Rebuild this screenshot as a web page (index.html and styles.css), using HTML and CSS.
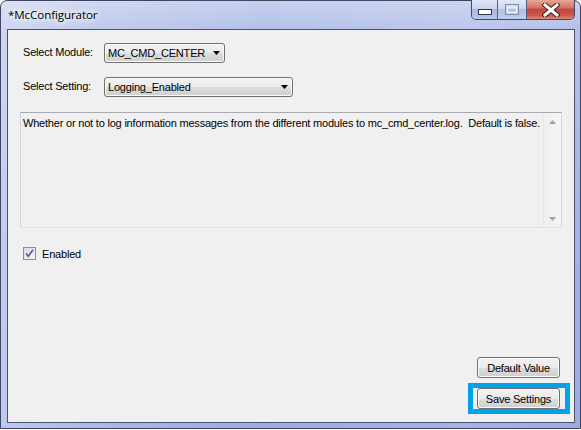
FILE: index.html
```html
<!DOCTYPE html>
<html>
<head>
<meta charset="utf-8">
<link rel="stylesheet" href="styles.css">
</head>
<body>
<div class="window">
  <div class="titlebar">
    <span class="title">*McConfigurator</span>
    <div class="caption">
      <div class="cbtn min"><svg width="14" height="6" viewBox="0 0 14 6"><rect x="0.5" y="0.5" width="13" height="5" fill="#fff" stroke="#2b3550"/></svg></div>
      <div class="cbtn max"><svg width="14" height="11" viewBox="0 0 14 11"><rect x="0.5" y="0.5" width="13" height="10" fill="none" stroke="#7d89a8"/><rect x="2.5" y="3.5" width="9" height="5" fill="none" stroke="#eef1f9" stroke-width="1.5"/></svg></div>
      <div class="cbtn close"><svg width="18" height="14" viewBox="0 0 18 14"><path d="M3 2 L15 12 M15 2 L3 12" stroke="#3a1a18" stroke-width="5" stroke-linecap="square"/><path d="M3 2 L15 12 M15 2 L3 12" stroke="#fff" stroke-width="3" stroke-linecap="square"/></svg></div>
    </div>
  </div>
  <div class="client">
    <div class="row r1">
      <span class="lbl">Select Module:</span>
      <div class="combo c1"><span class="ctext">MC_CMD_CENTER</span><svg class="arrow" width="7" height="4" viewBox="0 0 7 4"><path d="M0 0 H7 L3.5 4 Z" fill="#000"/></svg></div>
    </div>
    <div class="row r2">
      <span class="lbl">Select Setting:</span>
      <div class="combo c2"><span class="ctext">Logging_Enabled</span><svg class="arrow" width="7" height="4" viewBox="0 0 7 4"><path d="M0 0 H7 L3.5 4 Z" fill="#000"/></svg></div>
    </div>
    <div class="desc">
      <div class="desc-text">Whether or not to log information messages from the different modules to mc_cmd_center.log.&nbsp; Default is false.</div>
      <div class="vscroll">
        <svg width="7" height="4" viewBox="0 0 7 4"><path d="M0 4 H7 L3.5 0 Z" fill="#a3a3a3"/></svg>
        <svg width="7" height="4" viewBox="0 0 7 4"><path d="M0 0 H7 L3.5 4 Z" fill="#a3a3a3"/></svg>
      </div>
    </div>
    <div class="check">
      <span class="box"><svg width="11" height="11" viewBox="0 0 11 11"><path d="M2 5.5 L4.3 8.3 L9 1.8" fill="none" stroke="#4b5f96" stroke-width="1.6"/></svg></span>
      <span class="check-label">Enabled</span>
    </div>
    <div class="actions">
      <button class="btn btn-default">Default Value</button>
      <div class="hl"><button class="btn">Save Settings</button></div>
    </div>
  </div>
</div>
</body>
</html>
```
FILE: styles.css
```css
html, body {
  margin: 0;
  padding: 0;
  background: #ffffff;
}
body {
  width: 581px;
  height: 430px;
  overflow: hidden;
  font-family: "Liberation Sans", Arial, sans-serif;
  font-size: 11px;
  letter-spacing: -0.2px;
  color: #000;
}
.window {
  box-sizing: border-box;
  width: 581px;
  height: 429px;
  border: 1px solid #3d4763;
  border-radius: 7px 7px 0 0;
  padding: 0 5px 5px 6px;
  display: flex;
  flex-direction: column;
  background:
    linear-gradient(to right, rgba(255,255,255,0.35) 0, rgba(255,255,255,0.15) 18%, rgba(255,255,255,0) 45%, rgba(255,255,255,0.1) 80%, rgba(255,255,255,0) 100%),
    linear-gradient(to bottom, #c7d1ee 0, #b4c1ea 28px, #a2b1e6 60%, #9dabe3 100%);
}
.titlebar {
  height: 28px;
  display: flex;
  align-items: flex-start;
  justify-content: space-between;
}
.title {
  font-family: "Open Sans", "Liberation Sans", sans-serif;
  font-size: 11.6px;
  letter-spacing: -0.1px;
  margin: 6px 0 0 1px;
  text-shadow: 0 0 6px #fff, 0 0 8px #fff, 0 0 10px rgba(255,255,255,0.9);
}
.caption {
  display: flex;
  margin-top: -1px;
  border: 1px solid #3f4a66;
  border-top: none;
  border-radius: 0 0 5px 5px;
  overflow: hidden;
  height: 19px;
}
.cbtn {
  display: flex;
  align-items: center;
  justify-content: center;
  height: 19px;
}
.min {
  width: 25px;
  background: linear-gradient(to bottom, #dfe6f6 0, #c7d2ee 45%, #a9b7de 50%, #b7c6ea 100%);
  border-right: 1px solid #56627f;
}
.min svg { margin-top: 4px; }
.max {
  width: 28px;
  background: linear-gradient(to bottom, #e3e9f7 0, #ccd6f0 45%, #b3c0e3 50%, #c0cdee 100%);
  border-right: 1px solid #56627f;
}
.close {
  width: 47px;
  background: linear-gradient(to bottom, #e8a596 0, #d37465 40%, #c4473a 50%, #c9554a 80%, #de8a7a 100%);
}
.client {
  flex: 1;
  border: 1px solid #4a5270;
  background: #f0f0f0;
  display: flex;
  flex-direction: column;
  box-sizing: border-box;
}
.row {
  display: flex;
  align-items: center;
  padding-left: 15px;
  height: 20px;
}
.r1 { margin-top: 13px; }
.r2 { margin-top: 14px; }
.lbl {
  width: 81px;
  white-space: nowrap;
  margin-top: -2px;
}
.combo {
  box-sizing: border-box;
  height: 20px;
  border: 1px solid #707070;
  border-radius: 3px;
  background: linear-gradient(to bottom, #f2f2f2 0, #ebebeb 50%, #dddddd 50%, #cfcfcf 100%);
  box-shadow: inset 0 0 0 1px #fbfbfb;
  display: flex;
  align-items: center;
  justify-content: space-between;
  padding: 0 4px 0 3px;
}
.c1 { width: 121px; }
.c2 { width: 189px; }
.ctext { font-size: 11px; }
.desc {
  margin: 15px 0 0 12px;
  width: 542px;
  height: 116px;
  box-sizing: border-box;
  border: 1px solid #abadb3;
  border-top-color: #a8aab0;
  border-left-color: #d0d3d9;
  border-right-color: #d6dae0;
  border-bottom-color: #dfe3e8;
  display: flex;
  background: #f0f0f0;
}
.desc-text {
  flex: 1;
  padding: 3px 0 0 2px;
  white-space: nowrap;
  line-height: 14px;
}
.vscroll {
  width: 17px;
  border-left: 1px solid #e8e8e8;
  background: linear-gradient(to right, #efefef, #f4f4f4);
  display: flex;
  flex-direction: column;
  justify-content: space-between;
  align-items: center;
  padding: 7px 0 6px 0;
}
.check {
  display: flex;
  align-items: center;
  margin: 19px 0 0 15px;
}
.box {
  box-sizing: border-box;
  width: 13px;
  height: 13px;
  border: 1px solid #8e8f8f;
  background: linear-gradient(to bottom right, #dcdcdc, #f6f6f6);
  display: flex;
  align-items: center;
  justify-content: center;
}
.check-label {
  margin-left: 6px;
}
.actions {
  margin-top: auto;
  margin-bottom: 8px;
  margin-right: 4px;
  display: flex;
  flex-direction: column;
  align-items: flex-end;
}
.btn {
  box-sizing: border-box;
  width: 83px;
  height: 21px;
  border: 1px solid #707070;
  border-radius: 3px;
  background: linear-gradient(to bottom, #f2f2f2 0, #ebebeb 50%, #dddddd 50%, #cfcfcf 100%);
  box-shadow: inset 0 0 0 1px #fcfcfc;
  font-family: "Liberation Sans", Arial, sans-serif;
  font-size: 11px;
  letter-spacing: -0.2px;
  color: #000;
  padding: 0;
  text-align: center;
}
.btn-default {
  margin-right: 10px;
  margin-bottom: 5px;
}
.hl {
  border: 5px solid #00a2e8;
  padding: 0 5px 0 4px;
  display: flex;
}
```
